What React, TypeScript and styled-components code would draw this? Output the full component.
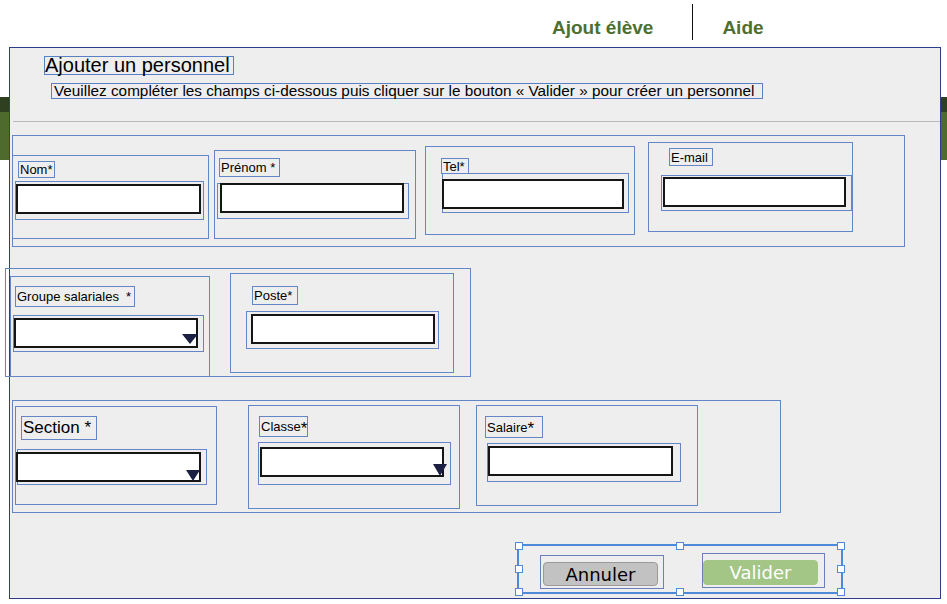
import React from "react";
import styled, { createGlobalStyle, css } from "styled-components";

const GlobalStyle = createGlobalStyle`
  html, body {
    margin: 0;
    padding: 0;
    background: #ffffff;
  }
  * {
    box-sizing: border-box;
  }
`;

// props communes : taille et décalage de chaque cadre de la maquette
type BoxProps = { $w: number; $h: number; $ml?: number; $mt?: number };

const boxed = css<BoxProps>`
  flex: none;
  width: ${(p) => p.$w}px;
  height: ${(p) => p.$h}px;
  margin-left: ${(p) => p.$ml ?? 0}px;
  margin-top: ${(p) => p.$mt ?? 0}px;
`;

const Page = styled.div`
  position: relative;
  width: 947px;
  height: 604px;
  overflow: hidden;
  background: #ffffff;
  font-family: "Liberation Sans", Arial, sans-serif;
`;

const TopNav = styled.nav`
  display: flex;
  align-items: center;
  height: 44px;
  padding-left: 552px;
`;

const NavLink = styled.a<{ $ml?: number }>`
  margin-left: ${(p) => p.$ml ?? 0}px;
  margin-top: 11px;
  color: #4e6f2f;
  font-weight: bold;
  font-size: 19px;
  text-decoration: none;
`;

const NavDivider = styled.span`
  align-self: flex-start;
  width: 1px;
  height: 36px;
  margin-top: 4px;
  margin-left: 39px;
  background: #111111;
`;

const GreenBand = styled.div`
  margin-top: 53px;
  height: 63px;
  border-top: 15px solid #2f4020;
  background: #4e6a2d;
`;

const Modal = styled.div`
  position: absolute;
  top: 47px;
  left: 9px;
  width: 932px;
  height: 552px;
  display: flex;
  flex-direction: column;
  align-items: flex-start;
  background: #eeeeee;
  border: 1px solid #2b3d8b;
`;

const Title = styled.h1<BoxProps>`
  ${boxed};
  margin-bottom: 0;
  margin-right: 0;
  display: flex;
  align-items: center;
  padding-left: 0;
  border: 1px solid #5b7fc4;
  font-size: 20px;
  font-weight: normal;
  color: #000;
  white-space: nowrap;
`;

const Subtitle = styled.p<BoxProps>`
  ${boxed};
  margin-bottom: 0;
  margin-right: 0;
  display: flex;
  align-items: center;
  padding-left: 2px;
  border: 1px solid #5b7fc4;
  font-size: 15.3px;
  color: #000;
  white-space: nowrap;
`;

const Separator = styled.hr`
  align-self: stretch;
  height: 1px;
  margin: 22px 0 0 3px;
  border: none;
  background: #b9b9b9;
`;

const Row = styled.div<BoxProps>`
  ${boxed};
  display: flex;
  align-items: flex-start;
  border: 1px solid #6586c6;
`;

const Field = styled.div<BoxProps>`
  ${boxed};
  display: flex;
  flex-direction: column;
  align-items: flex-start;
  border: 1px solid #6586c6;
`;

const Label = styled.label<BoxProps & { $size?: number }>`
  ${boxed};
  display: flex;
  align-items: center;
  padding-left: 1px;
  border: 1px solid #6586c6;
  font-size: ${(p) => p.$size ?? 13}px;
  color: #000;
  white-space: pre;
`;

const Star = styled.sup`
  font-size: 17px;
  line-height: 0;
  position: relative;
  top: 2px;
`;

const InputWrap = styled.div<BoxProps>`
  ${boxed};
  display: flex;
  flex-direction: column;
  align-items: flex-start;
  border: 1px solid #6586c6;
`;

const TextBox = styled.div<BoxProps>`
  ${boxed};
  position: relative;
  background: #ffffff;
  border: 2px solid #151515;
`;

const SelectArrow = styled.span<{ $w: number; $h: number; $right: number; $bottom: number }>`
  position: absolute;
  right: ${(p) => p.$right}px;
  bottom: ${(p) => p.$bottom}px;
  width: 0;
  height: 0;
  border-left: ${(p) => p.$w / 2}px solid transparent;
  border-right: ${(p) => p.$w / 2}px solid transparent;
  border-top: ${(p) => p.$h}px solid #1b2043;
`;

const ButtonGroup = styled.div<BoxProps>`
  ${boxed};
  position: relative;
  display: flex;
  align-items: flex-start;
  border: 2px solid #4f8ad9;
`;

const Handle = styled.span<{ $x: string; $y: string }>`
  position: absolute;
  left: ${(p) => p.$x};
  top: ${(p) => p.$y};
  width: 8px;
  height: 8px;
  margin: -4px 0 0 -4px;
  background: #ffffff;
  border: 1px solid #4f8ad9;
`;

const ButtonWrap = styled.div<BoxProps>`
  ${boxed};
  display: flex;
  align-items: flex-start;
  border: 1px solid #6a80b8;
`;

const Button = styled.button<BoxProps & { $primary?: boolean }>`
  ${boxed};
  display: flex;
  align-items: center;
  justify-content: center;
  padding: 0;
  border-radius: 4px;
  border: 1px solid ${(p) => (p.$primary ? "#a3c585" : "#9a9a9a")};
  background: ${(p) => (p.$primary ? "#a3c585" : "#c2c2c2")};
  color: ${(p) => (p.$primary ? "#ffffff" : "#000000")};
  font-family: "DejaVu Sans", "Liberation Sans", sans-serif;
  font-size: 18px;
  cursor: pointer;
`;

const handles = [
  ["0%", "0%"],
  ["50%", "0%"],
  ["100%", "0%"],
  ["0%", "50%"],
  ["100%", "50%"],
  ["0%", "100%"],
  ["50%", "100%"],
  ["100%", "100%"],
];

const App: React.FC = () => {
  return (
    <Page>
      <GlobalStyle />
      <TopNav>
        <NavLink href="#">Ajout élève</NavLink>
        <NavDivider />
        <NavLink href="#" $ml={29}>Aide</NavLink>
      </TopNav>
      <GreenBand />

      <Modal>
        <Title $w={190} $h={19} $ml={34} $mt={8}>Ajouter un personnel</Title>
        <Subtitle $w={712} $h={16} $ml={41} $mt={8}>
          Veuillez compléter les champs ci-dessous puis cliquer sur le bouton « Valider » pour créer un personnel
        </Subtitle>
        <Separator />

        {/* ligne 1 : identité */}
        <Row $w={893} $h={112} $ml={2} $mt={13}>
          <Field $w={197} $h={84} $ml={-1} $mt={19}>
            <Label $w={37} $h={17} $ml={5} $mt={5}>Nom*</Label>
            <InputWrap $w={189} $h={39} $ml={2} $mt={3}>
              <TextBox $w={185} $h={30} $mt={2} />
            </InputWrap>
          </Field>
          <Field $w={202} $h={89} $ml={5} $mt={14}>
            <Label $w={61} $h={19} $ml={4} $mt={7}>Prénom *</Label>
            <InputWrap $w={192} $h={36} $ml={2} $mt={6}>
              <TextBox $w={184} $h={30} $ml={2} $mt={-1} />
            </InputWrap>
          </Field>
          <Field $w={210} $h={89} $ml={9} $mt={10}>
            <Label $w={28} $h={16} $ml={15} $mt={11}>Tel*</Label>
            <InputWrap $w={187} $h={40} $ml={16} $mt={-1}>
              <TextBox $w={182} $h={30} $ml={-1} $mt={5} />
            </InputWrap>
          </Field>
          <Field $w={205} $h={90} $ml={13} $mt={6}>
            <Label $w={44} $h={18} $ml={20} $mt={5}>E-mail</Label>
            <InputWrap $w={191} $h={36} $ml={12} $mt={9}>
              <TextBox $w={183} $h={30} $ml={1} $mt={1} />
            </InputWrap>
          </Field>
        </Row>

        {/* ligne 2 : poste */}
        <Row $w={466} $h={109} $ml={-5} $mt={21}>
          <Field $w={200} $h={101} $ml={4} $mt={7}>
            <Label $w={120} $h={21} $ml={4} $mt={9}>{"Groupe salariales  *"}</Label>
            <InputWrap $w={191} $h={37} $ml={2} $mt={8}>
              <TextBox $w={184} $h={30} $mt={2}>
                <SelectArrow $w={17} $h={10} $right={-2} $bottom={2} />
              </TextBox>
            </InputWrap>
          </Field>
          <Field $w={224} $h={100} $ml={20} $mt={4}>
            <Label $w={46} $h={19} $ml={21} $mt={12}>Poste*</Label>
            <InputWrap $w={193} $h={38} $ml={15} $mt={6}>
              <TextBox $w={184} $h={30} $ml={4} $mt={2} />
            </InputWrap>
          </Field>
        </Row>

        {/* ligne 3 : affectation */}
        <Row $w={769} $h={113} $ml={2} $mt={23}>
          <Field $w={202} $h={99} $ml={2} $mt={5}>
            <Label $w={76} $h={24} $ml={5} $mt={9} $size={17}>Section *</Label>
            <InputWrap $w={190} $h={36} $ml={1} $mt={9}>
              <TextBox $w={185} $h={30} $ml={-2} $mt={2}>
                <SelectArrow $w={14} $h={11} $right={-1} $bottom={-1} />
              </TextBox>
            </InputWrap>
          </Field>
          <Field $w={212} $h={104} $ml={31} $mt={4}>
            <Label $w={49} $h={21} $ml={10} $mt={10}>
              Classe<Star>*</Star>
            </Label>
            <InputWrap $w={193} $h={43} $ml={9} $mt={5}>
              <TextBox $w={184} $h={30} $ml={1} $mt={4}>
                <SelectArrow $w={15} $h={12} $right={-5} $bottom={-1} />
              </TextBox>
            </InputWrap>
          </Field>
          <Field $w={222} $h={101} $ml={16} $mt={4}>
            <Label $w={58} $h={22} $ml={8} $mt={10}>
              Salaire<Star>*</Star>
            </Label>
            <InputWrap $w={194} $h={39} $ml={10} $mt={5}>
              <TextBox $w={185} $h={30} $mt={2} />
            </InputWrap>
          </Field>
        </Row>

        <ButtonGroup $w={326} $h={50} $ml={507} $mt={31}>
          {handles.map(([x, y]) => (
            <Handle key={x + y} $x={x} $y={y} />
          ))}
          <ButtonWrap $w={124} $h={34} $ml={21} $mt={9}>
            <Button $w={115} $h={24} $ml={2} $mt={6}>Annuler</Button>
          </ButtonWrap>
          <ButtonWrap $w={123} $h={35} $ml={38} $mt={7}>
            <Button $w={115} $h={25} $mt={6} $primary>Valider</Button>
          </ButtonWrap>
        </ButtonGroup>
      </Modal>
    </Page>
  );
};

export default App;
